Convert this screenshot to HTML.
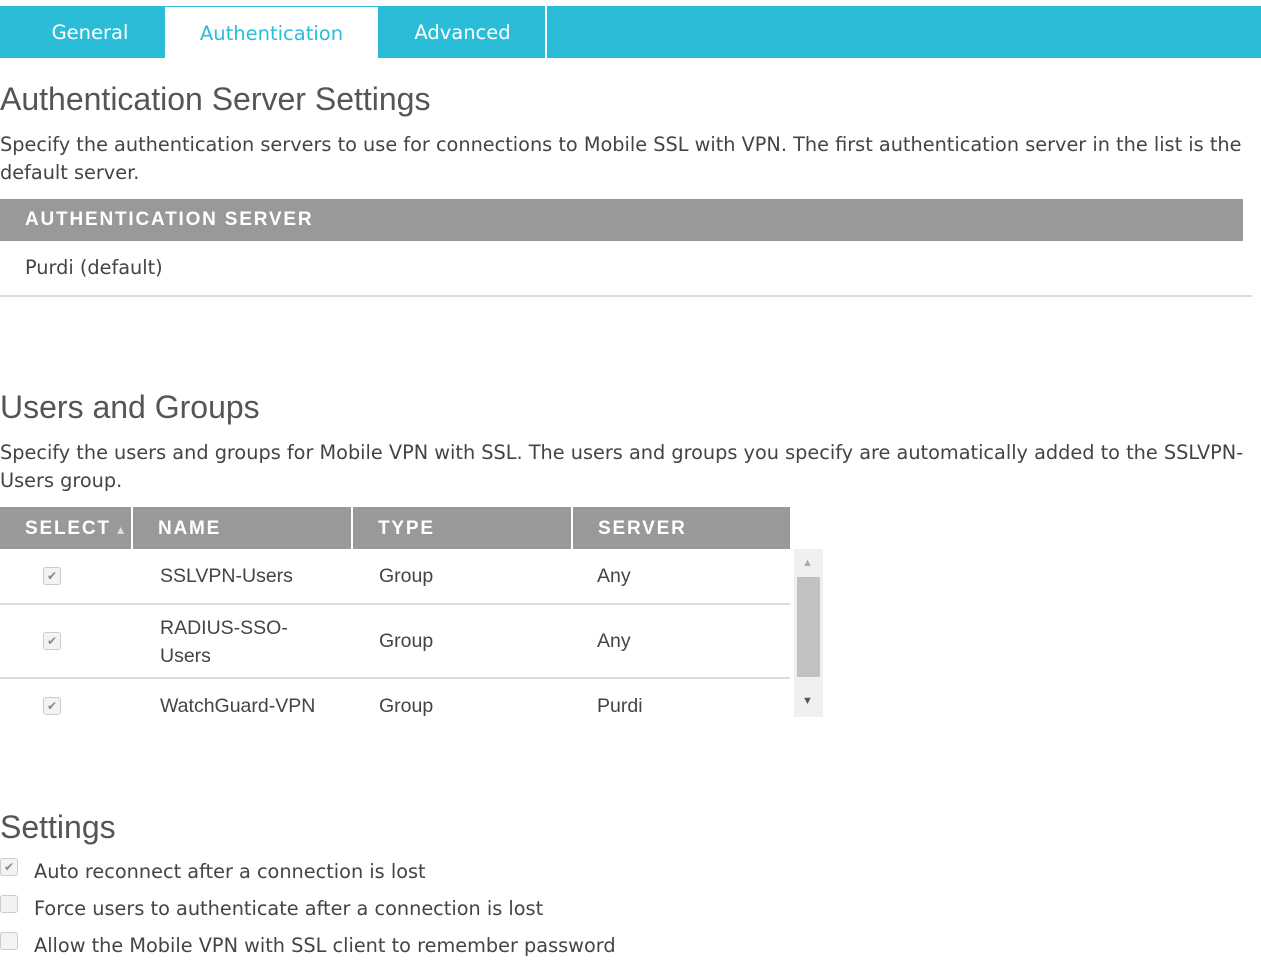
<!DOCTYPE html><html><head><style>
body{margin:0;width:1261px;height:965px;overflow:hidden;background:#fff;font-family:"Liberation Sans",sans-serif;color:#444;position:relative}
.a{position:absolute;white-space:nowrap}
.tabbar{position:absolute;left:0;top:6px;width:1261px;height:52px;background:#2bbcd8}
.tab{position:absolute;top:0;height:52px;line-height:54px;text-align:center;color:#fff;font-size:19.5px;font-family:"DejaVu Sans",sans-serif}
h{position:absolute;font-size:32px;color:#555;font-weight:300;letter-spacing:0px}
.p{position:absolute;left:0;font-size:19.3px;line-height:28px;color:#444;width:1250px;font-family:"DejaVu Sans",sans-serif}
.th{position:absolute;background:#999;color:#fff;font-weight:bold;font-size:19px;letter-spacing:1.8px}
.cb{position:absolute;width:16px;height:16px;border:1px solid #ccc;border-radius:3px;background:#f3f3f3;font-size:12px;line-height:16px;text-align:center;color:#888}
.line{position:absolute;height:2px;background:#ddd}
.t{position:absolute;font-size:19.5px;color:#444;white-space:nowrap}
.s{position:absolute;font-size:19.3px;color:#444;white-space:nowrap;font-family:"DejaVu Sans",sans-serif}
</style></head><body>
<div class="tabbar">
<div class="tab" style="left:0;width:180px;">General</div>
<div class="tab" style="left:165px;width:213px;top:1px;height:51px;background:#fff;color:#2bbcd8">Authentication</div>
<div class="tab" style="left:380px;width:165px">Advanced</div>
<div style="position:absolute;left:545px;top:0;width:2px;height:52px;background:#fff"></div>
</div>
<h style="left:0;top:81px">Authentication Server Settings</h>
<div class="p" style="top:131px">Specify the authentication servers to use for connections to Mobile SSL with VPN. The first authentication server in the list is the default server.</div>
<div class="th" style="left:0;top:199px;width:1243px;height:42px;line-height:42px;padding-left:25px;box-sizing:border-box">AUTHENTICATION SERVER</div>
<div class="s" style="left:25px;top:256px">Purdi (default)</div>
<div class="line" style="left:0;top:295px;width:1252px"></div>
<h style="left:0;top:389px">Users and Groups</h>
<div class="p" style="top:439px">Specify the users and groups for Mobile VPN with SSL. The users and groups you specify are automatically added to the SSLVPN-Users group.</div>
<div class="th" style="left:0;top:507px;width:790px;height:42px"></div>
<div class="th a" style="left:25px;top:508px;line-height:42px;background:none">SELECT<span style="font-size:12px;color:#ddd;margin-left:4px">▲</span></div>
<div class="th a" style="left:158px;top:508px;line-height:42px;background:none">NAME</div>
<div class="th a" style="left:378px;top:508px;line-height:42px;background:none">TYPE</div>
<div class="th a" style="left:598px;top:508px;line-height:42px;background:none">SERVER</div>
<div style="position:absolute;left:131px;top:507px;width:2px;height:42px;background:#fff"></div>
<div style="position:absolute;left:351px;top:507px;width:2px;height:42px;background:#fff"></div>
<div style="position:absolute;left:571px;top:507px;width:2px;height:42px;background:#fff"></div>
<div class="cb" style="left:43px;top:567px">✔</div><div class="t" style="left:160px;top:565px">SSLVPN-Users</div><div class="t" style="left:379px;top:565px">Group</div><div class="t" style="left:597px;top:565px">Any</div>
<div class="line" style="left:0;top:603px;width:790px"></div>
<div class="cb" style="left:43px;top:632px">✔</div><div class="t" style="left:160px;top:614px;line-height:28px">RADIUS-SSO-<br>Users</div><div class="t" style="left:379px;top:630px">Group</div><div class="t" style="left:597px;top:630px">Any</div>
<div class="line" style="left:0;top:677px;width:790px"></div>
<div class="cb" style="left:43px;top:697px">✔</div><div class="t" style="left:160px;top:695px">WatchGuard-VPN</div><div class="t" style="left:379px;top:695px">Group</div><div class="t" style="left:597px;top:695px">Purdi</div>
<div style="position:absolute;left:794px;top:549px;width:29px;height:168px;background:#f0f0f0"></div>
<div style="position:absolute;left:797px;top:577px;width:23px;height:100px;background:#c1c1c1"></div>
<div class="a" style="left:802px;top:557px;font-size:11px;color:#aaa">▲</div>
<div class="a" style="left:802px;top:695px;font-size:11px;color:#555">▼</div>
<h style="left:0;top:809px">Settings</h>
<div class="cb" style="left:0;top:858px">✔</div><div class="s" style="left:34px;top:860px">Auto reconnect after a connection is lost</div>
<div class="cb" style="left:0;top:895px"></div><div class="s" style="left:34px;top:897px">Force users to authenticate after a connection is lost</div>
<div class="cb" style="left:0;top:932px"></div><div class="s" style="left:34px;top:934px">Allow the Mobile VPN with SSL client to remember password</div>
</body></html>
